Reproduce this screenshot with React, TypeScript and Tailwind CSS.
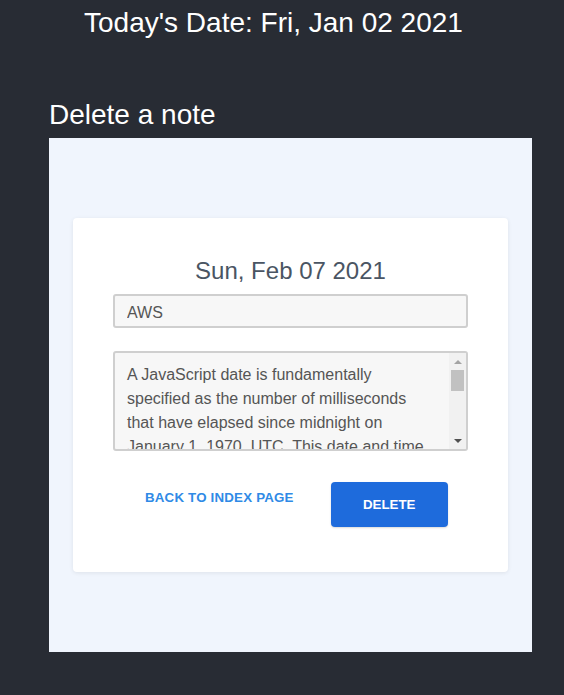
import { useState } from 'react';

const noteBody =
  'A JavaScript date is fundamentally specified as the number of milliseconds that have elapsed since midnight on January 1, 1970, UTC. This date and time is not the same as the UNIX epoch (the number of seconds that have elapsed since midnight on January 1, 1970, UTC), which is the predominant base value for computer-recorded date and time values.';

function FakeScrollbar() {
  return (
    <div className="w-[17px] shrink-0 bg-[#f1f1f1] flex flex-col items-center">
      <div className="h-[17px] flex items-center justify-center">
        <div className="w-0 h-0 border-l-[4px] border-r-[4px] border-b-[4px] border-l-transparent border-r-transparent border-b-[#a3a3a3]" />
      </div>
      <div className="w-[13px] h-[21px] bg-[#c1c1c1]" />
      <div className="flex-1" />
      <div className="h-[17px] flex items-center justify-center">
        <div className="w-0 h-0 border-l-[4px] border-r-[4px] border-t-[4px] border-l-transparent border-r-transparent border-t-[#505050]" />
      </div>
    </div>
  );
}

export default function App() {
  const [title, setTitle] = useState('AWS');
  const [body, setBody] = useState(noteBody);

  return (
    <div className="min-h-[695px] bg-[#282c34] font-['Liberation_Sans',Arial,sans-serif] text-white">
      <header className="pl-[84px] pt-[5px] h-[94px]">
        <h1 className="text-[28px] leading-[36px]">Today's Date: Fri, Jan 02 2021</h1>
      </header>

      <div className="pl-[49px]">
        <h2 className="text-[28px] leading-[42px] pb-[2px]">Delete a note</h2>

        <div className="w-[483px] bg-[#f0f5fd] h-[514px] pt-[80px] px-[24px]">
          <div className="bg-white rounded-[4px] shadow-[0_1px_4px_rgba(0,0,0,0.08)] h-[354px] px-[40px] pt-[37px]">
            <p className="text-center text-[24px] leading-[32px] text-[#4a5563]">Sun, Feb 07 2021</p>

            <input
              value={title}
              onChange={(e) => setTitle(e.target.value)}
              className="mt-[7px] block w-full h-[34px] bg-[#f7f7f7] border-2 border-[#cfcfcf] rounded-[3px] px-[12px] pt-[3px] text-[16px] text-[#555] outline-none"
            />

            <div className="mt-[23px] flex h-[100px] w-full bg-[#f7f7f7] border-2 border-[#cfcfcf] rounded-[3px] overflow-hidden">
              <textarea
                value={body}
                onChange={(e) => setBody(e.target.value)}
                className="flex-1 block h-full bg-transparent pl-[12px] pr-[14px] pt-[10px] text-[16px] leading-[24px] text-[#555] outline-none resize-none overflow-hidden"
              />
              <FakeScrollbar />
            </div>

            <div className="flex items-start mt-[31px]">
              <button className="px-[32px] pt-[8px] text-[13.3px] leading-[16px] font-bold text-[#2f8ae6] tracking-[0.2px]">
                BACK TO INDEX PAGE
              </button>
              <button className="ml-[5px] w-[117px] h-[45px] rounded-[4px] bg-[#1e6bdc] text-white text-[13.3px] font-bold shadow-[0_1px_2px_rgba(0,0,0,0.15)]">
                DELETE
              </button>
            </div>
          </div>
        </div>
      </div>
    </div>
  );
}
